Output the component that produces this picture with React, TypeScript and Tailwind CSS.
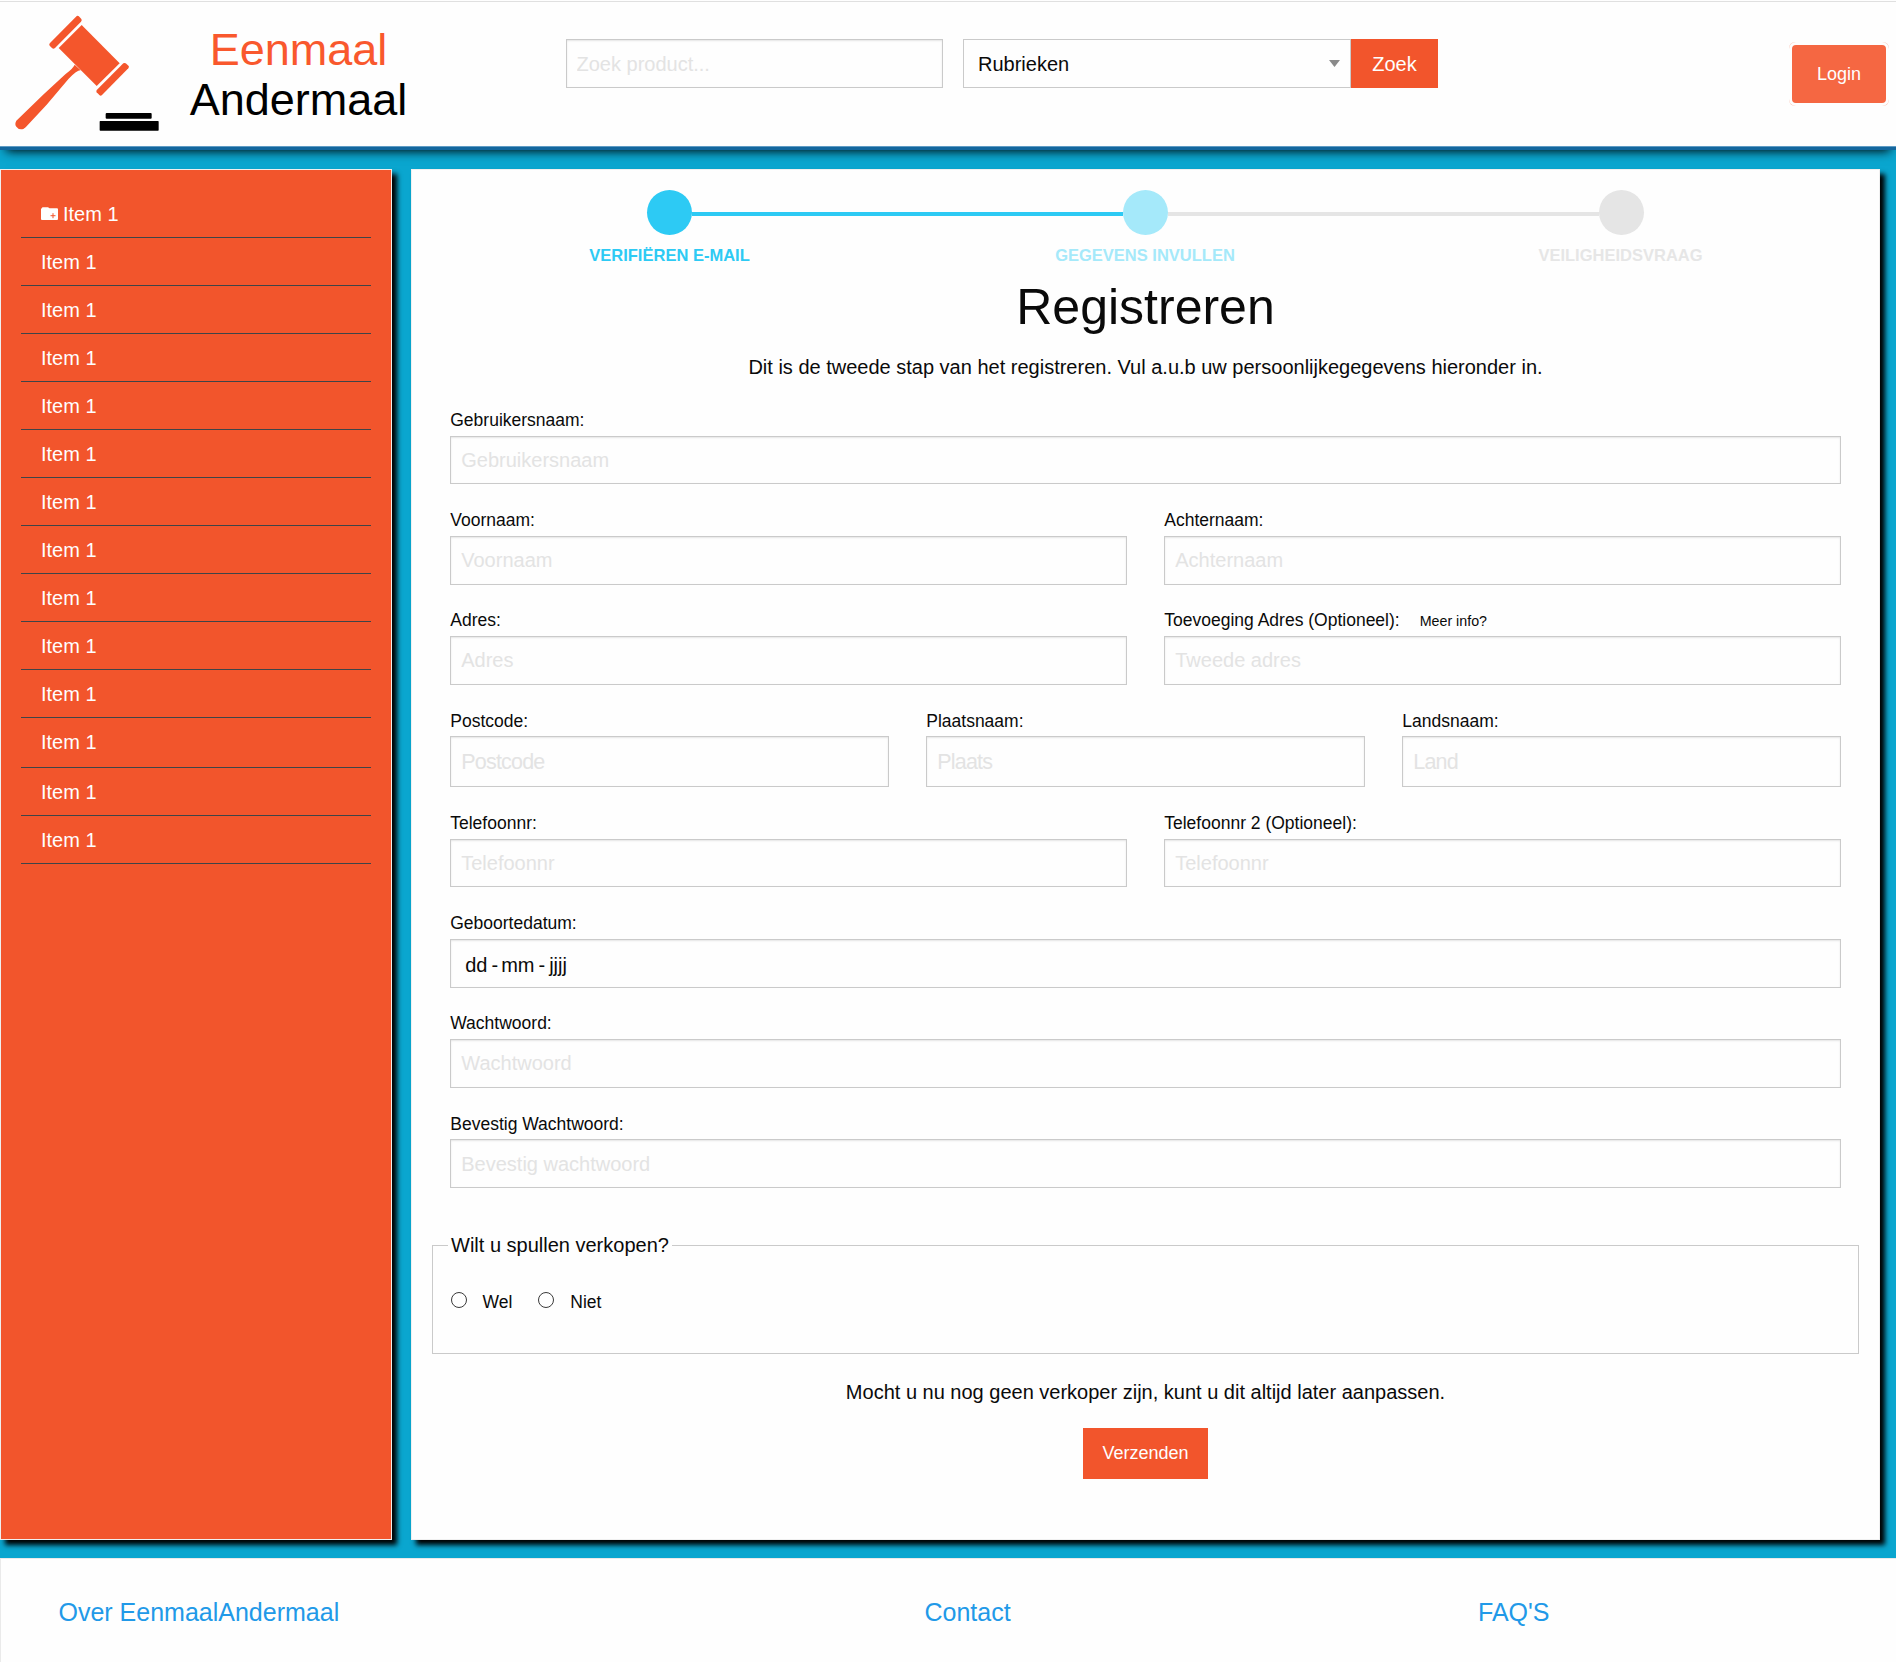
import React from "react";

const inputBox =
  "block w-full border border-[#cacaca] bg-[#fefefe] shadow-[inset_0_1px_2px_rgba(10,10,10,0.1)] outline-none placeholder:text-[#e3e3e3] placeholder:opacity-100";

type FieldProps = {
  label: string;
  placeholder: string;
  note?: string;
  labelClass?: string;
  inputClass?: string;
};

function Field({
  label,
  placeholder,
  note,
  labelClass = "leading-[32px]",
  inputClass = "h-[49px] text-[20px]",
}: FieldProps) {
  return (
    <label className="min-w-0 flex-1">
      <span className={`flex h-[32px] items-baseline whitespace-nowrap text-[17.5px] ${labelClass}`}>
        {label}
        {note && <span className="ml-[20px] text-[14.250px]">{note}</span>}
      </span>
      <input className={`${inputBox} px-[10px] ${inputClass}`} placeholder={placeholder} />
    </label>
  );
}

function Row({ children, className = "h-[100px]" }: { children: React.ReactNode; className?: string }) {
  return <div className={`flex gap-[37.5px] ${className}`}>{children}</div>;
}

function Gavel() {
  return (
    <svg className="h-[146px] w-[170px] shrink-0" viewBox="0 0 510 438">
      <g fill="#f4562c">
        <path d="M228 50Q233 45 238 50L244 57Q247 61 243 65L165 144Q160 148 156 144L149 137Q146 133 150 129Z" />
        <path d="M245 75L359 190L290 258L176 144Z" />
        <path d="M370 190Q375 187 379 191L386 198Q388 201 385 205L306 285Q302 289 298 285L290 277Q287 273 291 269Z" />
        <path d="M224 194Q222 202 196 223L131 283L49 362Q43 372 49 380Q57 391 70 387L77 382L140 314L206 236Q232 210 242 211Z" />
      </g>
      <rect x="317" y="339" width="138" height="17.500" rx="3" />
      <rect x="299" y="363" width="177" height="29" rx="2" />
    </svg>
  );
}

function Header() {
  return (
    <header className="relative z-10 h-[150px] border-b-[3px] border-[#14679e] bg-[#fefefe] shadow-[0_7px_10px_-6px_#000]">
      <div className="flex h-[147px] flex-col border-b border-[#5f9bc4] pt-px">
        <div className="flex h-[145px] items-start border-t border-[#e0e0e0]">
          <div className="-mt-[2px] flex">
            <Gavel />
          </div>
          <div className="mt-[23px] w-[257px] text-center text-[45px] leading-[50px]">
            <div className="text-[#f9582d]">Eenmaal</div>
            <div className="text-black">Andermaal</div>
          </div>
          <input
            className={`${inputBox} mt-[37px] ml-[139px] h-[49px] w-[377px]! px-[9.500px] pt-[1px] text-[20px]`}
            placeholder="Zoek product..."
          />
          <div className="mt-[37px] ml-[20px] flex h-[49px] w-[388px] items-center justify-between border border-[#cacaca] bg-[#fefefe] pr-[10px] pl-[14px] text-[20px]">
            <span>Rubrieken</span>
            <svg className="h-[7px] w-[11px]" viewBox="0 0 11 7">
              <path d="M0 0H11L5.500 7Z" fill="#8a8a8a" />
            </svg>
          </div>
          <button className="mt-[37px] h-[49px] w-[87px] bg-[#f2552c] text-[20px] text-[#fefefe]">Zoek</button>
          <div className="mt-[40px] mr-[7px] ml-auto h-[64px] w-[100px] rounded-[6px] bg-[#fac4b4]">
            <button className="block h-full w-full rounded-[7px] border-[3px] border-[#fefefe] bg-[#f56742] text-[18px] text-[#fefefe]">
              Login
            </button>
          </div>
        </div>
      </div>
    </header>
  );
}

const items = Array.from({ length: 14 }, (_, i) => i);

function Sidebar() {
  return (
    <nav className="h-[1371px] w-[392px] shrink-0 border border-[#efefef] bg-[#f2552c] px-[20px] pt-[20px] shadow-[5px_5px_5px_#000]">
      <ul className="text-[20px] text-[#fefefe]">
        {items.map((i) => (
          <li
            key={i}
            className={`flex items-start border-b border-[#3f4448] pl-[20px] leading-[49px] ${i === 11 ? "h-[50px]" : "h-[48px]"}`}
          >
            {i === 0 && (
              <svg className="mt-[17px] mr-[5px] h-[13px] w-[17px]" viewBox="0 0 17 13">
                <path d="M0 2L1.500 .3H7L8.500 1.300H16Q17 1.300 17 2.300V12Q17 13 16 13H1Q0 13 0 12Z" fill="#fefefe" />
                <path d="M12 6.200V11.200M9.500 8.700H14.500" stroke="#f2552c" strokeWidth="1" />
              </svg>
            )}
            Item 1
          </li>
        ))}
      </ul>
    </nav>
  );
}

function Stepper() {
  return (
    <ol className="flex text-center text-[16.5px] leading-[20px] font-bold">
      <li className="w-[476px] text-[#2dcaf4]">
        <div className="flex items-center">
          <div className="flex-1" />
          <div className="h-[45px] w-[45px] rounded-full bg-[#2dcaf4]" />
          <div className="mt-[3px] h-[4px] flex-1 bg-[#2dcaf4]" />
        </div>
        <div className="mt-[10px]">VERIFIËREN E-MAIL</div>
      </li>
      <li className="w-[476px] text-[#a5e9fa]">
        <div className="flex items-center">
          <div className="mt-[3px] h-[4px] flex-1 bg-[#2dcaf4]" />
          <div className="h-[45px] w-[45px] rounded-full bg-[#a5e9fa]" />
          <div className="mt-[3px] h-[4px] flex-1 bg-[#e5e5e5]" />
        </div>
        <div className="mt-[10px] pr-px">GEGEVENS INVULLEN</div>
      </li>
      <li className="w-[476px] text-[#e6e6e6]">
        <div className="flex items-center">
          <div className="mt-[3px] h-[4px] flex-1 bg-[#e5e5e5]" />
          <div className="h-[45px] w-[45px] rounded-full bg-[#e5e5e5]" />
          <div className="flex-1" />
        </div>
        <div className="mt-[10px] pr-[2px]">VEILIGHEIDSVRAAG</div>
      </li>
    </ol>
  );
}

function Radio({ label, className = "" }: { label: string; className?: string }) {
  return (
    <label className={`flex items-start text-[17.5px] leading-[22px] ${className}`}>
      <input
        type="radio"
        name="verkopen"
        className="mt-[1px] mr-[16px] h-[16px] w-[16px] appearance-none rounded-full border border-[#3a3a3a] bg-white"
      />
      {label}
    </label>
  );
}

const tall = "h-[51px] pt-[2px] text-[21.5px] placeholder:tracking-[-0.8px]";
const lowered = "leading-[34px]";
const short = "h-[48px] text-[20px]";

function Form() {
  return (
    <main className="h-[1371px] w-[1469px] shrink-0 border border-[#f0f0f0] bg-[#fefefe] pt-[20px] pl-[19.500px] shadow-[5px_5px_5px_#000]">
      <div className="w-[1428px]">
        <Stepper />
        <h1 className="mt-[12px] text-center text-[50px] leading-[60px]">Registreren</h1>
        <p className="mt-[15px] h-[52px] text-center text-[20px] leading-[31px]">
          Dit is de tweede stap van het registreren. Vul a.u.b uw persoonlijkegegevens hieronder in.
        </p>
        <form className="pr-[18.750px] pl-[18.750px]">
          <Row>
            <Field label="Gebruikersnaam:" placeholder="Gebruikersnaam" inputClass={short} />
          </Row>
          <Row>
            <Field label="Voornaam:" placeholder="Voornaam" />
            <Field label="Achternaam:" placeholder="Achternaam" />
          </Row>
          <Row>
            <Field label="Adres:" placeholder="Adres" />
            <Field label="Toevoeging Adres (Optioneel):" note="Meer info?" placeholder="Tweede adres" />
          </Row>
          <Row className="h-[103px]">
            <Field label="Postcode:" placeholder="Postcode" labelClass={lowered} inputClass={tall} />
            <Field label="Plaatsnaam:" placeholder="Plaats" labelClass={lowered} inputClass={tall} />
            <Field label="Landsnaam:" placeholder="Land" labelClass={lowered} inputClass={tall} />
          </Row>
          <Row>
            <Field label="Telefoonnr:" placeholder="Telefoonnr" inputClass={short} />
            <Field label="Telefoonnr 2 (Optioneel):" placeholder="Telefoonnr" inputClass={short} />
          </Row>
          <Row>
            <div className="flex-1">
              <div className="h-[32px] text-[17.5px] leading-[32px]">Geboortedatum:</div>
              <div className={`${inputBox} h-[49px] pl-[14px]`}>
                <div className="flex text-[20px] leading-[50px]">
                  <span>dd</span>
                  <span className="ml-[4px]">-</span>
                  <span className="ml-[3px]">mm</span>
                  <span className="ml-[4px]">-</span>
                  <span className="ml-[4px]">jjjj</span>
                </div>
              </div>
            </div>
          </Row>
          <Row>
            <Field label="Wachtwoord:" placeholder="Wachtwoord" />
          </Row>
          <Row>
            <Field label="Bevestig Wachtwoord:" placeholder="Bevestig wachtwoord" labelClass={lowered} inputClass="h-[49px] pt-[1px] text-[20px]" />
          </Row>
        </form>
        <fieldset className="mt-[23px] mr-[1px] h-[124px] border border-[#cacaca] pl-[18px]">
          <legend className="-ml-[3px] h-[30px] bg-[#fefefe] px-[3.500px] text-[20px] leading-[30px]">
            Wilt u spullen verkopen?
          </legend>
          <div className="mt-[31px] flex">
            <Radio label="Wel" />
            <Radio label="Niet" className="ml-[26px]" />
          </div>
        </fieldset>
        <p className="mt-[23px] text-center text-[20px] leading-[30px]">
          Mocht u nu nog geen verkoper zijn, kunt u dit altijd later aanpassen.
        </p>
        <div className="mt-[21px] flex justify-center">
          <button className="h-[51px] w-[125px] bg-[#f2552c] text-[18px] text-[#fefefe]">Verzenden</button>
        </div>
      </div>
    </main>
  );
}

function Footer() {
  return (
    <footer className="flex h-[104px] border-t border-l border-[#eaeaea] bg-[#fefefe] pt-[37px] pl-[57.500px] text-[25px] leading-[32px] text-[#2199e8]">
      <a className="w-[866px]">Over EenmaalAndermaal</a>
      <a className="w-[553.500px]">Contact</a>
      <a>FAQ'S</a>
    </footer>
  );
}

export default function App() {
  return (
    <div className="h-[1662px] w-[1896px] overflow-hidden bg-[#0aa6cf] font-['Liberation_Sans',Arial,sans-serif] text-[#0a0a0a]">
      <Header />
      <div className="mt-[19px] mb-[18px] flex gap-[19px]">
        <Sidebar />
        <Form />
      </div>
      <Footer />
    </div>
  );
}
